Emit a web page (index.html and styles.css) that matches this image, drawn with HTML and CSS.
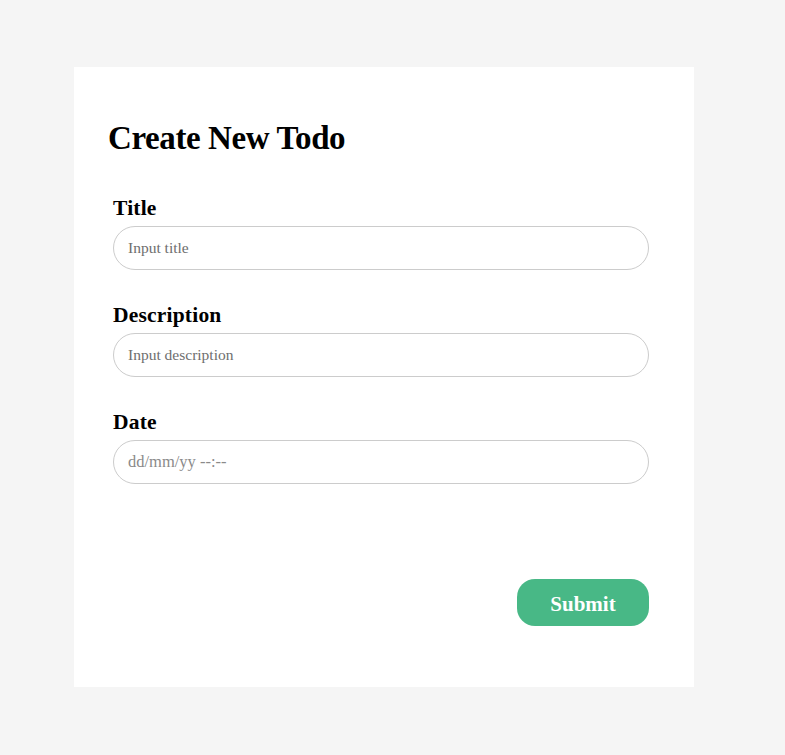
FILE: index.html
```html
<!DOCTYPE html>
<html>
<head>
<meta charset="utf-8">
<link rel="stylesheet" href="styles.css">
</head>
<body>
<main class="card">
  <h1 class="heading">Create New Todo</h1>
  <form class="form">
    <div class="field">
      <label class="label" for="title">Title</label>
      <input class="input" id="title" type="text" placeholder="Input title">
    </div>
    <div class="field">
      <label class="label" for="desc">Description</label>
      <input class="input" id="desc" type="text" placeholder="Input description">
    </div>
    <div class="field">
      <label class="label" for="date">Date</label>
      <input class="input input-date" id="date" type="text" placeholder="dd/mm/yy --:--">
    </div>
    <div class="actions">
      <button class="submit" type="button">Submit</button>
    </div>
  </form>
</main>
</body>
</html>
```
FILE: styles.css
```css
html, body {
  margin: 0;
  padding: 0;
}
body {
  background: #f5f5f5;
  padding: 67px 0 0 74px;
  height: 755px;
  box-sizing: border-box;
  font-family: "Liberation Serif", "DejaVu Serif", serif;
}
.card {
  width: 620px;
  height: 620px;
  box-sizing: border-box;
  background: #ffffff;
  padding: 51px 45px 0 34px;
}
.heading {
  margin: 0;
  font-size: 33px;
  line-height: 40px;
  font-weight: 700;
  color: #000;
  letter-spacing: -0.4px;
}
.form {
  margin: 38px 0 0 5px;
  width: 536px;
  display: flex;
  flex-direction: column;
  gap: 33px;
}
.field {
  display: flex;
  flex-direction: column;
  gap: 6px;
}
.label {
  font-size: 21.5px;
  line-height: 24px;
  font-weight: 700;
  color: #000;
  letter-spacing: 0.2px;
}
.input {
  height: 44px;
  box-sizing: border-box;
  border: 1px solid #cccccc;
  border-radius: 22px;
  padding: 0 14px;
  font-family: "Liberation Serif", serif;
  font-size: 15.5px;
  color: #333;
  background: #fff;
  outline: none;
}
.input::placeholder {
  color: #6e6e6e;
}
.input-date::placeholder {
  color: #8a8a8a;
  font-size: 16.5px;
}
.actions {
  display: flex;
  justify-content: flex-end;
  margin-top: 62px;
}
.submit {
  width: 132px;
  height: 47px;
  border: none;
  border-radius: 18px;
  background: #48b886;
  color: #ffffff;
  font-family: "Liberation Serif", serif;
  font-size: 21px;
  font-weight: 700;
  padding: 3px 0 0;
  cursor: pointer;
}
```
